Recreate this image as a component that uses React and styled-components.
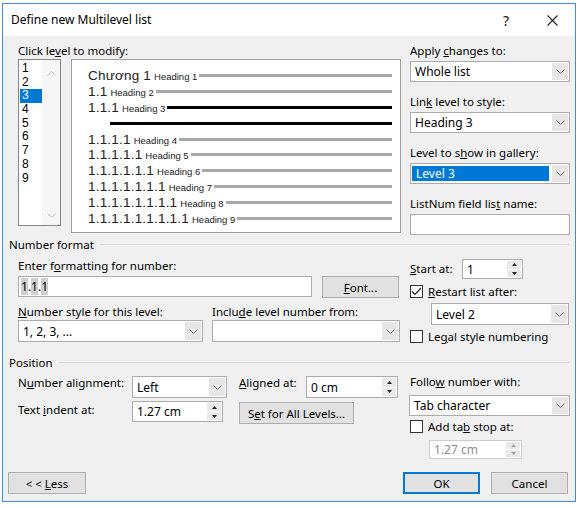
import React from 'react'
import styled, { createGlobalStyle } from 'styled-components'

const UI = `"Noto Sans", "Open Sans", sans-serif`
const PREVIEW = `"Liberation Sans", Arial, sans-serif`

const GlobalStyle = createGlobalStyle`
  html, body { margin: 0; padding: 0; background: #fff; }
  body { font-family: ${UI}; font-size: 11.5px; color: #000; }
  * { box-sizing: border-box; }
`

const Page = styled.div`
  width: 579px;
  height: 508px;
  padding: 3px 0 0 2px;
  background: #fff;
  overflow: hidden;
`
const Dialog = styled.div`
  width: 574px;
  height: 499px;
  border: 1px solid #3c8de0;
  background: #f0f0f0;
  display: flex;
  flex-direction: column;
`
const TitleBar = styled.div`
  height: 32px;
  flex: none;
  background: #fff;
  display: flex;
  align-items: center;
  padding-left: 8px;
`
const Title = styled.div`
  flex: 1;
  font-size: 12px;
  line-height: 16px;
`
const TitleButton = styled.div`
  width: 46px;
  height: 32px;
  display: flex;
  align-items: center;
  justify-content: center;
  font-size: 14px;
  color: #111;
`
const Body = styled.div`
  flex: 1;
  display: flex;
  flex-direction: column;
  padding: 0 4px 7px 6px;
`
const Key = styled.span`
  text-decoration: underline;
  text-underline-offset: 1px;
`
const Label = styled.div`
  line-height: ${p => p.$lh || 16}px;
  white-space: nowrap;
  margin-bottom: ${p => p.$mb || 0}px;
  width: ${p => (p.$w ? `${p.$w}px` : 'auto')};
  padding-top: ${p => p.$pt || 0}px;
  flex: none;
`

/* ---------- top ---------- */
const TopSection = styled.div`
  display: flex;
  gap: 9px;
  height: 200px;
  padding: 7px 0 0 9px;
  flex: none;
`
const LeftTop = styled.div`
  width: 383px;
`
const TopRow = styled.div`
  display: flex;
  align-items: flex-start;
  gap: 10px;
`
const LevelList = styled.div`
  width: 43px;
  height: 167px;
  border: 1px solid #828790;
  background: #fff;
  display: flex;
`
const LevelItems = styled.div`
  flex: 1;
  padding: 2px 0 0 1px;
`
const LevelItem = styled.div`
  height: 13.7px;
  line-height: 13.7px;
  padding-left: 2px;
  font-family: ${PREVIEW};
  font-size: 12px;
  background: ${p => (p.$active ? '#0078d7' : 'transparent')};
  color: ${p => (p.$active ? '#fff' : '#000')};
`
const ScrollBar = styled.div`
  width: 18px;
  background: #f6f6f6;
  display: flex;
  flex-direction: column;
  justify-content: space-between;
  align-items: center;
  padding: 11px 0 7px;
`
const Preview = styled.div`
  width: 330px;
  height: 174px;
  border: 1px solid #a0a0a0;
  background: #fff;
  padding: 8px 8px 0 16px;
  font-family: ${PREVIEW};
`
const PRow = styled.div`
  height: 15.8px;
  display: flex;
  align-items: center;
  padding-left: ${p => p.$indent || 0}px;
  white-space: nowrap;
`
const PNum = styled.span`
  font-size: 13.5px;
  color: #222;
  letter-spacing: 0.2px;
`
const PHead = styled.span`
  font-size: 9.5px;
  color: #222;
  margin-left: 3px;
  position: relative;
  top: 1px;
`
const PLine = styled.div`
  flex: 1;
  height: 3px;
  margin-left: 2px;
  background: ${p => (p.$dark ? '#000' : '#a8a8a8')};
`
const RightCol = styled.div`
  width: 160px;
  flex: none;
`
const Field = styled.div`
  margin-bottom: 12px;
`

/* ---------- controls ---------- */
const SelectBox = styled.div`
  width: ${p => (p.$w ? `${p.$w}px` : '100%')};
  height: ${p => p.$h || 22}px;
  margin-left: ${p => p.$ml || 0}px;
  border: 1px solid #acacac;
  background: #fff;
  display: flex;
  flex: none;
`
const SelectValue = styled.div`
  flex: 1;
  display: flex;
  align-items: center;
  padding-left: 4px;
  margin: ${p => (p.$hi ? '2px 2px 2px 1px' : '0')};
  background: ${p => (p.$hi ? '#0078d7' : 'transparent')};
  color: ${p => (p.$hi ? '#fff' : '#000')};
  white-space: nowrap;
  font-size: 12px;
`
const ArrowBox = styled.div`
  width: 16px;
  margin: 1px;
  background: #e6e6e6;
  display: flex;
  align-items: center;
  justify-content: center;
`
const TextInput = styled.div`
  width: ${p => p.$w}px;
  height: ${p => p.$h || 21}px;
  border: 1px solid #acacac;
  background: #fff;
  display: flex;
  align-items: center;
  padding-left: 2px;
  font-size: 12px;
  flex: none;
`
const Shade = styled.span`
  background: #cfcfcf;
`
const SpinBox = styled.div`
  width: ${p => p.$w}px;
  height: ${p => p.$h || 21}px;
  margin-left: ${p => p.$ml || 0}px;
  border: 1px solid ${p => (p.$disabled ? '#cccccc' : '#acacac')};
  background: #fff;
  display: flex;
  flex: none;
  color: ${p => (p.$disabled ? '#8d8d8d' : '#000')};
`
const SpinValue = styled.div`
  flex: 1;
  display: flex;
  align-items: center;
  padding-left: 4px;
  font-size: 12px;
  white-space: nowrap;
`
const SpinButtons = styled.div`
  width: 14px;
  margin: 1px;
  display: flex;
  flex-direction: column;
  background: #e9e9e9;
`
const SpinHalf = styled.div`
  flex: 1;
  display: flex;
  align-items: center;
  justify-content: center;
  & + & { border-top: 1px solid #fff; }
`
const Button = styled.div`
  width: ${p => p.$w}px;
  height: 22px;
  margin-left: ${p => p.$ml || 0}px;
  margin-top: ${p => p.$mt || 0}px;
  border: ${p => (p.$default ? '2px solid #0078d7' : '1px solid #adadad')};
  background: #e1e1e1;
  display: flex;
  align-items: center;
  justify-content: center;
  white-space: pre;
  flex: none;
  font-size: 11.5px;
`
const CheckRow = styled.div`
  display: flex;
  align-items: center;
  height: 15px;
  margin-top: ${p => p.$mt || 0}px;
  gap: 5px;
  white-space: nowrap;
`
const CheckBox = styled.div`
  width: 13px;
  height: 13px;
  border: 1px solid #333;
  background: #fff;
  display: flex;
  align-items: center;
  justify-content: center;
  flex: none;
`

/* ---------- groups ---------- */
const GroupHeader = styled.div`
  height: 16px;
  display: flex;
  align-items: center;
  flex: none;
`
const GroupRule = styled.div`
  flex: 1;
  height: 1px;
  background: #dcdcdc;
  margin: 0 2px 0 6px;
`
const GroupBody = styled.div`
  display: flex;
  gap: 9px;
  padding-left: 9px;
  height: ${p => p.$h}px;
  flex: none;
`
const GroupLeft = styled.div`
  width: 383px;
  flex: none;
`
const Row = styled.div`
  display: flex;
  align-items: ${p => p.$align || 'flex-start'};
  margin-top: ${p => p.$mt || 0}px;
`
const Col = styled.div`
  width: ${p => p.$w}px;
  margin-left: ${p => p.$ml || 0}px;
  flex: none;
`
const Footer = styled.div`
  margin-top: auto;
  display: flex;
  padding-right: 1px;
`

/* ---------- icons ---------- */
const Chevron = ({ color = '#606060', up }) => (
  <svg width="9" height="5" viewBox="0 0 9 5">
    <polyline
      points={up ? '0.5,4.5 4.5,0.5 8.5,4.5' : '0.5,0.5 4.5,4.5 8.5,0.5'}
      fill="none"
      stroke={color}
      strokeWidth="1"
    />
  </svg>
)
const Tri = ({ up, color = '#222' }) => (
  <svg width="5" height="3" viewBox="0 0 5 3">
    <polygon points={up ? '0,3 2.5,0 5,3' : '0,0 5,0 2.5,3'} fill={color} />
  </svg>
)
const Check = () => (
  <svg width="11" height="9" viewBox="0 0 11 9">
    <polyline points="1,4.5 4,7.5 10,1" fill="none" stroke="#222" strokeWidth="1.2" />
  </svg>
)
const CloseIcon = () => (
  <svg width="11" height="11" viewBox="0 0 11 11">
    <path d="M0.5 0.5 L10.5 10.5 M10.5 0.5 L0.5 10.5" stroke="#222" strokeWidth="1.1" />
  </svg>
)

const Select = ({ value, w, h, ml, hi }) => (
  <SelectBox $w={w} $h={h} $ml={ml}>
    <SelectValue $hi={hi}>{value}</SelectValue>
    <ArrowBox><Chevron color="#777" /></ArrowBox>
  </SelectBox>
)
const Spin = ({ value, w, h, ml, disabled }) => (
  <SpinBox $w={w} $h={h} $ml={ml} $disabled={disabled}>
    <SpinValue>{value}</SpinValue>
    <SpinButtons>
      <SpinHalf><Tri up color={disabled ? '#a0a0a0' : '#222'} /></SpinHalf>
      <SpinHalf><Tri color={disabled ? '#a0a0a0' : '#222'} /></SpinHalf>
    </SpinButtons>
  </SpinBox>
)

const levels = [
  { num: 'Chương 1', head: 'Heading 1' },
  { num: '1.1', head: 'Heading 2' },
  { num: '1.1.1', head: 'Heading 3', dark: true },
  { line: true },
  { num: '1.1.1.1', head: 'Heading 4' },
  { num: '1.1.1.1.1', head: 'Heading 5' },
  { num: '1.1.1.1.1.1', head: 'Heading 6' },
  { num: '1.1.1.1.1.1.1', head: 'Heading 7' },
  { num: '1.1.1.1.1.1.1.1', head: 'Heading 8' },
  { num: '1.1.1.1.1.1.1.1.1', head: 'Heading 9' },
]

export default function App() {
  return (
    <Page>
      <GlobalStyle />
      <Dialog>
        <TitleBar>
          <Title>Define new Multilevel list</Title>
          <TitleButton>?</TitleButton>
          <TitleButton><CloseIcon /></TitleButton>
        </TitleBar>

        <Body>
          <TopSection>
            <LeftTop>
              <Label>Click le<Key>v</Key>el to modify:</Label>
              <TopRow>
                <LevelList>
                  <LevelItems>
                    {[1, 2, 3, 4, 5, 6, 7, 8, 9].map(n => (
                      <LevelItem key={n} $active={n === 3}>{n}</LevelItem>
                    ))}
                  </LevelItems>
                  <ScrollBar>
                    <Chevron up color="#c4c4c4" />
                    <Chevron color="#c4c4c4" />
                  </ScrollBar>
                </LevelList>
                <Preview>
                  {levels.map((l, i) =>
                    l.line ? (
                      <PRow key={i} $indent={20}><PLine $dark /></PRow>
                    ) : (
                      <PRow key={i}>
                        <PNum>{l.num}</PNum>
                        <PHead>{l.head}</PHead>
                        <PLine $dark={l.dark} />
                      </PRow>
                    )
                  )}
                </Preview>
              </TopRow>
            </LeftTop>

            <RightCol>
              <Field>
                <Label $mb={2}>Apply <Key>c</Key>hanges to:</Label>
                <Select value="Whole list" h={21} />
              </Field>
              <Field>
                <Label $mb={2}>Lin<Key>k</Key> level to style:</Label>
                <Select value="Heading 3" h={21} />
              </Field>
              <Field>
                <Label $mb={2}>Level to s<Key>h</Key>ow in gallery:</Label>
                <Select value="Level 3" h={21} hi />
              </Field>
              <Field>
                <Label $mb={2}>ListNum field lis<Key>t</Key> name:</Label>
                <TextInput $w={160} $h={21} />
              </Field>
            </RightCol>
          </TopSection>

          <GroupHeader>
            Number format
            <GroupRule />
          </GroupHeader>
          <GroupBody $h={102}>
            <GroupLeft>
              <Label style={{ marginTop: 6 }}>Enter f<Key>o</Key>rmatting for number:</Label>
              <Row $mt={2}>
                <TextInput $w={294}>
                  <Shade>1</Shade>.<Shade>1</Shade>.<Shade>1</Shade>
                </TextInput>
                <Button $w={77} $ml={10}><span><Key>F</Key>ont...</span></Button>
              </Row>
              <Row $mt={6}>
                <Col $w={185}>
                  <Label><Key>N</Key>umber style for this level:</Label>
                  <Select value="1, 2, 3, ..." />
                </Col>
                <Col $w={188} $ml={9}>
                  <Label>Inclu<Key>d</Key>e level number from:</Label>
                  <Select value="" />
                </Col>
              </Row>
            </GroupLeft>
            <RightCol>
              <Row $align="center" $mt={7}>
                <Label $w={52}><Key>S</Key>tart at:</Label>
                <Spin value="1" w={61} h={20} />
              </Row>
              <CheckRow $mt={5}>
                <CheckBox><Check /></CheckBox>
                <span><Key>R</Key>estart list after:</span>
              </CheckRow>
              <Row $mt={4}>
                <Select value="Level 2" w={138} ml={21} />
              </Row>
              <CheckRow $mt={4}>
                <CheckBox />
                <span>Le<Key>g</Key>al style numbering</span>
              </CheckRow>
            </RightCol>
          </GroupBody>

          <GroupHeader>
            Position
            <GroupRule />
          </GroupHeader>
          <GroupBody $h={96}>
            <GroupLeft>
              <Row $mt={6}>
                <Label $w={114} $lh={14}>N<Key>u</Key>mber alignment:</Label>
                <Select value="Left" w={95} />
                <Label $w={67} $lh={14} style={{ marginLeft: 12 }}><Key>A</Key>ligned at:</Label>
                <Spin value="0 cm" w={92} h={22} />
              </Row>
              <Row $mt={3}>
                <Label $w={114} $lh={14} $pt={2}>Text <Key>i</Key>ndent at:</Label>
                <Spin value="1.27 cm" w={91} />
                <Button $w={115} $ml={16} $mt={1}><span>S<Key>e</Key>t for All Levels...</span></Button>
              </Row>
            </GroupLeft>
            <RightCol>
              <Label style={{ marginTop: 4 }}>Follo<Key>w</Key> number with:</Label>
              <Row $mt={5}>
                <Select value="Tab character" w={161} h={21} ml={-1} />
              </Row>
              <CheckRow $mt={3}>
                <CheckBox />
                <span>Add ta<Key>b</Key> stop at:</span>
              </CheckRow>
              <Row $mt={6}>
                <Spin value="1.27 cm" w={93} h={19} ml={19} disabled />
              </Row>
            </RightCol>
          </GroupBody>

          <Footer>
            <Button $w={78} $ml={-1}><span>&lt; &lt; <Key>L</Key>ess</span></Button>
            <Button $w={77} $ml={317} $default>OK</Button>
            <Button $w={77} $ml={11}>Cancel</Button>
          </Footer>
        </Body>
      </Dialog>
    </Page>
  )
}
